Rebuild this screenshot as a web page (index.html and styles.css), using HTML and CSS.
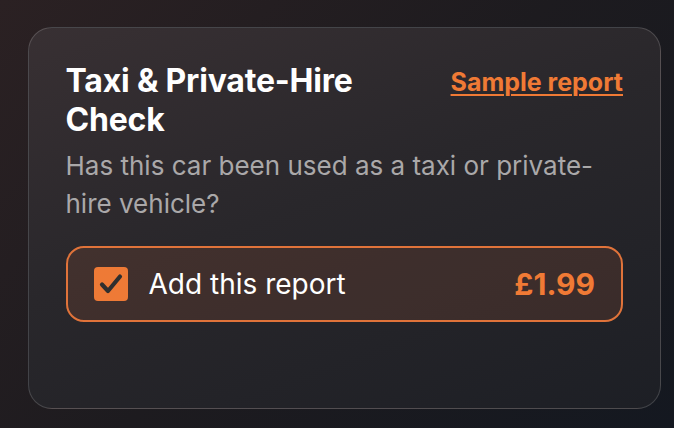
FILE: index.html
```html
<!DOCTYPE html>
<html lang="en">
<head>
<meta charset="utf-8">
<link rel="stylesheet" href="styles.css">
</head>
<body>
<div class="card">
  <div class="head">
    <h2 class="title">Taxi &amp; Private-Hire Check</h2>
    <a class="sample" href="#">Sample report</a>
  </div>
  <p class="desc">Has this car been used as a taxi or private-hire vehicle?</p>
  <label class="option">
    <span class="box">
      <svg viewBox="0 0 34 34" width="34" height="34"><path d="M8 17.5 L14 24 L26 9.5" fill="none" stroke="#2f2f2f" stroke-width="4.2" stroke-linecap="round" stroke-linejoin="round"/></svg>
    </span>
    <span class="label">Add this report</span>
    <span class="price">£1.99</span>
  </label>
</div>
</body>
</html>
```

FILE: styles.css
```css
html, body {
  margin: 0;
  height: 100%;
}
body {
  background: linear-gradient(135deg, #2b2123 0%, #1d1b1f 50%, #141820 100%);
  font-family: Inter, "Noto Sans", sans-serif;
  padding: 27px 13px 19px 28px;
  box-sizing: border-box;
}
.card {
  height: 382px;
  box-sizing: border-box;
  border: 1.5px solid rgba(255,255,255,0.16);
  border-radius: 24px;
  background: linear-gradient(160deg, #383033 0%, #29272b 45%, #1d1f25 100%);
  padding: 33px 37px 0 36.5px;
}
.head {
  display: flex;
  justify-content: space-between;
  align-items: flex-start;
}
.title {
  margin: 0;
  color: #fff;
  font-size: 32px;
  font-weight: 700;
  line-height: 39px;
  letter-spacing: -0.2px;
  width: 330px;
}
.sample {
  color: #f07a35;
  font-size: 25px;
  font-weight: 700;
  text-decoration: underline;
  text-underline-offset: 3px;
  text-decoration-thickness: 2px;
  line-height: 39px;
  margin-top: 2px;
}
.desc {
  margin: 8px 0 0 0;
  color: #aaa8a9;
  font-size: 26px;
  line-height: 38px;
  width: 545px;
}
.option {
  margin-top: 23px;
  display: flex;
  align-items: center;
  height: 76px;
  box-sizing: border-box;
  border: 2px solid #e0733a;
  border-radius: 18px;
  background: rgba(150, 80, 55, 0.22);
  padding: 0 26px 0 26px;
}
.box {
  width: 34px;
  height: 34px;
  border-radius: 4px;
  background: #ee7a36;
  display: flex;
}
.label {
  margin-left: 21px;
  color: #fff;
  font-size: 28px;
  flex: 1;
}
.price {
  color: #f07a35;
  font-size: 30px;
  font-weight: 700;
}
```
